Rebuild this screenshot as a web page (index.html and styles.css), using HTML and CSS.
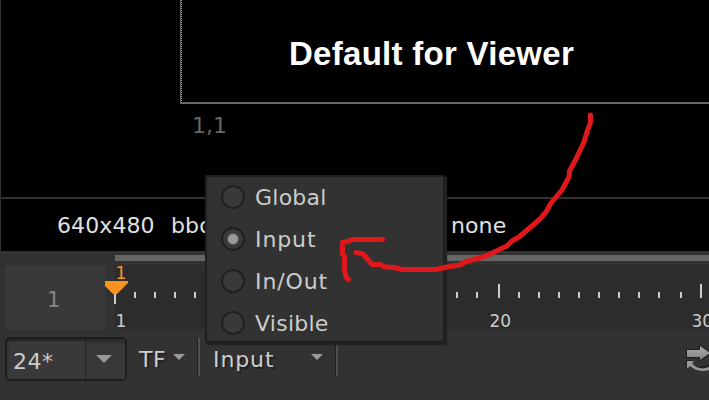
FILE: index.html
```html
<!DOCTYPE html>
<html lang="en">
<head>
<meta charset="utf-8">
<title>Viewer</title>
<link rel="stylesheet" href="styles.css">
</head>
<body>
<main class="app">
  <section class="viewer">
    <div class="frame"><h1 class="title">Default for Viewer</h1></div>
    <div class="origin">1,1</div>
  </section>
  <section class="status"><span class="format">640x480</span><span class="bbox">bbo</span><span class="channels">none</span></section>
  <div class="range"></div>
  <section class="timeline">
    <div class="current">1</div>
    <svg class="ruler" width="604" height="64" viewBox="105 265 604 64">
      <rect x="115" y="265" width="594" height="64" fill="#2c2c2c"/>
      <path d="M115 294V304" stroke="#ccc" stroke-width="2"/>
      <path d="M135 292v6M155 292v6M175 292v6M195 292v6M457 292v6M477 292v6M519 292v6M539 292v6M559 292v6M579 292v6M599 292v6M619 292v6M639 292v6M659 292v6M681 292v6M499 284v14M701 284v14" stroke="#ccc" stroke-width="2"/>
      <path d="M105 281H128V283L117 294H113L105 286Z" fill="#f7931e"/>
      <text x="115.500" y="279" class="num now">1</text>
      <text x="115.500" y="327" class="num">1</text>
      <text x="489.500" y="327" class="num">20</text>
      <text x="691.500" y="327" class="num">30</text>
    </svg>
  </section>
  <section class="controls">
    <div class="combo"><span class="fps">24*</span><span class="drop"><svg width="16" height="8"><path d="M0 0H16L8 8Z"/></svg></span></div>
    <div class="tf"><span>TF</span><svg width="12" height="6"><path d="M0 0H12L6 6Z"/></svg></div>
    <div class="range-mode"><span class="input">Input</span><svg width="12" height="6"><path d="M0 0H12L6 6Z"/></svg></div>
    <svg class="loop" width="24" height="28" viewBox="685 344 24 28">
      <defs><linearGradient id="metal" x2="0" y2="1"><stop stop-color="#aaa"/><stop offset="1" stop-color="#858585"/></linearGradient></defs>
      <path d="M687 350H700V346L710 353L700 360V357H687Z" fill="url(#metal)" stroke="#202020" stroke-width="2" paint-order="stroke"/>
      <path d="M686 371V360H694L691 363.500Q698 370 709 364V369Q698 374 690 366Z" fill="#202020"/>
      <path d="M687 369V361H694L692 363.500Q699 371 709 367V370Q698 373 690 366Z" fill="#999"/>
    </svg>
  </section>
  <div class="menu">
    <div class="option"><i class="radio"></i><span>Global</span></div>
    <div class="option"><i class="radio checked"></i><span class="input">Input</span></div>
    <div class="option"><i class="radio"></i><span class="inout">In/Out</span></div>
    <div class="option"><i class="radio"></i><span>Visible</span></div>
  </div>
  <svg class="annotation" width="709" height="400">
    <path d="M590.500 115V122L587 132L584 142L576 159L569.500 171L569 177L562 190L551 203L546 212L540 219L519 237L512 241L507 246L494 252L486 256L465 262L460 265L447 267L436 269.500H402L394 267.500L385 267L380 264.500H372L370 262L363 254L356 252.500"/>
    <path d="M382.500 239.500H352L348 241.500L342.500 242.500V254L344.500 256V270L346 277L348.500 279.500"/>
  </svg>
</main>
</body>
</html>
```
FILE: styles.css
```css
* { box-sizing: border-box; }
body { margin: 0; background: #323232; color: #ccc; font: 22px/26px "DejaVu Sans", sans-serif; }
.app { position: relative; width: 709px; height: 400px; overflow: hidden; display: flex; flex-direction: column; }
.viewer { height: 197px; margin-left: 1px; background: #000; flex: none; }
.frame { height: 104px; margin-left: 179px; border-left: 1px solid #666; border-bottom: 2px solid #666; background: repeating-linear-gradient(#aaa 0 1px, #000 1px 2px) 0 0 / 1px 100% no-repeat; padding: 35px 0 0 108px; }
.title { margin: 0; color: #fff; font: bold 33px/38px "Liberation Sans", sans-serif; letter-spacing: .28px; white-space: nowrap; }
.origin { margin: 9px 0 0 191px; color: #666; }
.status { height: 52px; flex: none; margin: 2px 0 0 1px; padding: 14px 0 0 56px; display: flex; background: #000; color: #e0e0e0; white-space: nowrap; letter-spacing: .1px; }
.format { width: 114px; }
.bbox { width: 280px; }
.range { height: 6px; flex: none; margin: 4px 0 4px 115px; background: #666; }
.timeline { height: 64px; flex: none; display: flex; padding-left: 5px; }
.current { width: 100px; height: 64px; flex: none; background: #393939; color: #858585; font-size: 21px; line-height: 70px; padding-left: 42px; }
.ruler { flex: none; display: block; }
.num { font-size: 17px; fill: #ccc; }
.now { fill: #f7931e; }
.controls { display: flex; height: 71px; padding: 8px 0 0 5px; align-items: flex-start; }
.combo { width: 122px; height: 44px; display: flex; border: 2px solid #1d1d1d; border-radius: 5px; background: #393939; box-shadow: inset 0 2px 2px #242424; }
.fps { width: 79px; padding: 10px 0 0 6px; border-right: 1px solid #222; letter-spacing: .5px; }
.drop { flex: 1; display: flex; align-items: center; justify-content: center; background: linear-gradient(#292929, #383838 6px); }
.drop svg { margin-right: 3px; }
.controls path { fill: #999; }
.controls .loop path:first-of-type { fill: url(#metal); }
.controls .loop path:nth-of-type(2) { fill: #202020; }
.tf, .range-mode { height: 38px; margin-top: 1px; display: flex; justify-content: space-between; border-right: 2px solid #505050; box-shadow: inset -1px 0 #202020; text-shadow: 2px 2px 1px #202020; }
.tf { width: 73px; padding: 9px 13px 0 12px; letter-spacing: .5px; }
.tf svg, .range-mode svg { margin-top: 7px; }
.range-mode { width: 138px; padding: 9px 13px 0 13px; }
.input { letter-spacing: .9px; }
.inout { letter-spacing: .9px; }
.loop { margin: 7px 0 0 auto; }
.menu { position: absolute; left: 205px; top: 175px; width: 240px; height: 168px; padding: 0 0 0 14px; border: 2px solid #1f1f1f; background: #323232; box-shadow: 2px 2px 1px #222; display: grid; grid-template-rows: repeat(4, 42px); }
.option { display: flex; align-items: center; gap: 10px; height: 42px; margin-top: -1px; letter-spacing: .25px; }
.option span { padding-top: 1px; }
.radio { width: 24px; height: 24px; border: 2px solid #202020; border-radius: 50%; background: #393939; }
.checked { background: radial-gradient(circle, #999 0 4px, #808080 5px, #393939 6px); }
.annotation { position: absolute; left: 0; top: 0; fill: none; stroke: #e0181b; stroke-width: 5; stroke-linecap: round; stroke-linejoin: round; }
```
